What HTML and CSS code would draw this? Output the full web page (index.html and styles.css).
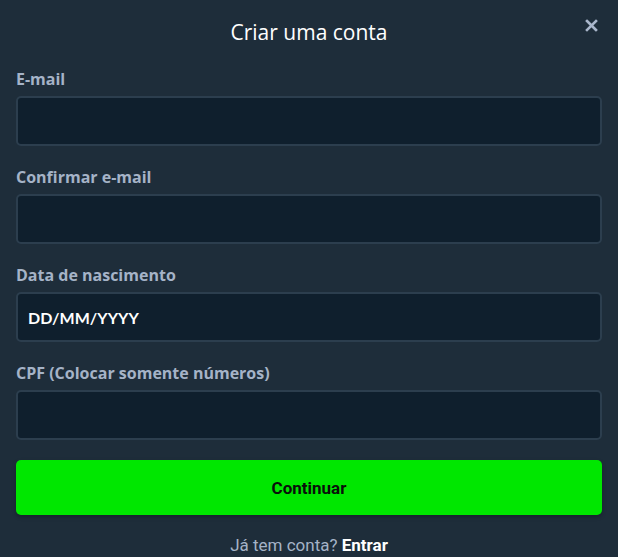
FILE: index.html
```html
<!DOCTYPE html>
<html lang="pt-BR">
<head>
  <meta charset="UTF-8" />
  <meta name="viewport" content="width=device-width, initial-scale=1.0"/>
  <title>Criar uma conta</title>
  <link rel="stylesheet" href="styles.css">
</head>
<body>

  <div class="signup-modal">
    <div class="modal-header">
      <h2>Criar uma conta</h2>
      <button class="close-btn" type="button" aria-label="Fechar">
        <svg width="13" height="13" viewBox="0 0 13 13">
          <path d="M2 2 L11 11 M11 2 L2 11" stroke="#a9b6cb" stroke-width="2.6" stroke-linecap="square"/>
        </svg>
      </button>
    </div>

    <form id="signupForm">
      <div class="field">
        <label for="email">E-mail</label>
        <input type="email" id="email" name="email">
      </div>

      <div class="field">
        <label for="email-confirm">Confirmar e-mail</label>
        <input type="email" id="email-confirm" name="emailConfirm">
      </div>

      <div class="field">
        <label for="birth">Data de nascimento</label>
        <input type="text" id="birth" name="birth" placeholder="DD/MM/YYYY">
      </div>

      <div class="field">
        <label for="cpf">CPF (Colocar somente números)</label>
        <input type="text" id="cpf" name="cpf">
      </div>

      <button type="submit" class="submit-btn">Continuar</button>
    </form>

    <p class="login-link">Já tem conta? <a href="#">Entrar</a></p>
  </div>

</body>
</html>
```

FILE: styles.css
```css
* {
  box-sizing: border-box;
  margin: 0;
  padding: 0;
}

body {
  background: #1e2d3a;
  font-family: 'Open Sans', sans-serif;
}

.signup-modal {
  padding: 0 16px;
}

.modal-header {
  display: flex;
  justify-content: center;
  align-items: flex-start;
  height: 69px;
  padding-top: 18px;
  position: relative;
}

.modal-header h2 {
  color: #ffffff;
  font-family: 'Open Sans', sans-serif;
  font-weight: 400;
  font-size: 21px;
  line-height: 28px;
}

.close-btn {
  position: absolute;
  right: 4px;
  top: 19px;
  background: none;
  border: none;
  cursor: pointer;
  display: flex;
}

.field {
  display: flex;
  flex-direction: column;
  gap: 7px;
  margin-bottom: 21px;
}

label {
  color: #a5b3c7;
  font-weight: 700;
  font-size: 16px;
  line-height: 20px;
}

input {
  width: 100%;
  height: 50px;
  background: #0f1f2d;
  border: 2px solid #2c3e4e;
  border-radius: 5px;
  padding: 0 10px;
  color: #ffffff;
  font-family: 'Lato', sans-serif;
  font-weight: 700;
  font-size: 16px;
  outline: none;
}

input::placeholder {
  color: #ffffff;
  opacity: 1;
}

.submit-btn {
  width: 100%;
  height: 55px;
  margin-top: -1px;
  background: #00e700;
  border: none;
  border-radius: 5px;
  color: #0a0f0a;
  font-family: 'Roboto', sans-serif;
  font-weight: 700;
  font-size: 17px;
  cursor: pointer;
  box-shadow: 0 2px 4px rgba(0,0,0,0.25);
}

.login-link {
  text-align: center;
  margin-top: 20px;
  color: #a5b3c7;
  font-family: 'Roboto', sans-serif;
  font-size: 17px;
}

.login-link a {
  color: #ffffff;
  font-weight: 700;
  text-decoration: none;
}
```
